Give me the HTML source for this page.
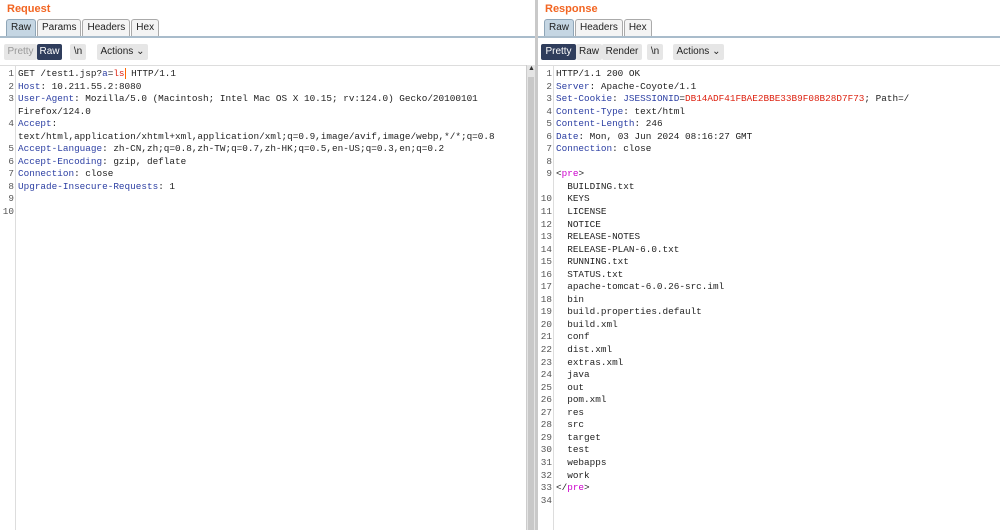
<!DOCTYPE html>
<html><head><meta charset="utf-8"><style>
*{margin:0;padding:0;box-sizing:border-box}
body{width:1000px;height:530px;background:#fff;font-family:"Liberation Sans",sans-serif;position:relative;overflow:hidden}
.pane{position:absolute;top:0;height:530px;background:#fff}
.title{position:absolute;top:3px;left:7px;color:#f26522;font-weight:bold;font-size:11px}
.tabs{position:absolute;top:19px;left:6px;display:flex;height:18px}
.tab{border:1px solid #aaa;border-bottom:none;border-radius:3px 3px 0 0;background:#f4f4f4;font-size:10px;padding:2px 4px 0;color:#222;margin-right:1px;height:18px}
.tab.sel{background:#c5d6e3;border-color:#8fa6b8}
.tabline{position:absolute;top:36px;left:0;right:0;height:2px;background:#a9bccb}
.tb{position:absolute;top:44px;display:flex;gap:0}
.b{font-size:10px;height:16px;line-height:16px;padding:0;text-align:center;white-space:nowrap;background:#e6e6e6;color:#222;border-radius:2px;flex:none}
.b.dark{background:#2f3d5c;color:#fff}
.b.dim{color:#999}
.ed{position:absolute;top:65px;bottom:0;border-top:1px solid #ddd}
.gut{position:absolute;top:0;bottom:0;left:0;width:16px;border-right:1px solid #ddd;background:#fff}
pre{position:absolute;top:2px;left:0;font-family:"Liberation Mono",monospace;font-size:9.35px;line-height:12.55px;color:#222}
.n{display:inline-block;width:14px;text-align:right;color:#555;margin-right:4px}
.k{color:#2c3fa3}.r{color:#d21}.p{color:#c0c}
</style></head><body>
<div class="pane" style="left:0;width:535px">
<div class="title">Request</div>
<div class="tabs"><div class="tab sel">Raw</div><div class="tab">Params</div><div class="tab">Headers</div><div class="tab">Hex</div></div>
<div class="tabline"></div>
<div class="tb" style="left:4px"><span class="b dim" style="width:33px">Pretty</span><span class="b dark" style="width:25px">Raw</span><span class="b" style="margin-left:8px;width:16px">\n</span><span class="b" style="margin-left:11px;width:51px">Actions ⌄</span></div>
<div class="ed" style="left:0;width:526px"><div class="gut"></div>
<pre><span class="n">1</span>GET /test1.jsp?<span class="k">a</span>=<span class="r">ls</span><span style="border-left:1px solid #f60"></span> HTTP/1.1
<span class="n">2</span><span class="k">Host</span>: 10.211.55.2:8080
<span class="n">3</span><span class="k">User-Agent</span>: Mozilla/5.0 (Macintosh; Intel Mac OS X 10.15; rv:124.0) Gecko/20100101
<span class="n"></span>Firefox/124.0
<span class="n">4</span><span class="k">Accept</span>:
<span class="n"></span>text/html,application/xhtml+xml,application/xml;q=0.9,image/avif,image/webp,*/*;q=0.8
<span class="n">5</span><span class="k">Accept-Language</span>: zh-CN,zh;q=0.8,zh-TW;q=0.7,zh-HK;q=0.5,en-US;q=0.3,en;q=0.2
<span class="n">6</span><span class="k">Accept-Encoding</span>: gzip, deflate
<span class="n">7</span><span class="k">Connection</span>: close
<span class="n">8</span><span class="k">Upgrade-Insecure-Requests</span>: 1
<span class="n">9</span>
<span class="n">10</span></pre></div>
<div style="position:absolute;left:526px;top:65px;width:9px;bottom:0;background:#e4e4e4;border-left:1px solid #ccc"><div style="position:absolute;top:0;left:1px;font-size:7px;color:#333">▲</div><div style="position:absolute;top:12px;left:1px;right:1px;bottom:0;background:#c8c8c8"></div></div>
</div>
<div style="position:absolute;left:535px;top:0;width:3px;height:530px;background:#c9c9c9"></div>
<div class="pane" style="left:538px;width:462px">
<div class="title">Response</div>
<div class="tabs"><div class="tab sel">Raw</div><div class="tab">Headers</div><div class="tab">Hex</div></div>
<div class="tabline"></div>
<div class="tb" style="left:3px"><span class="b dark" style="width:35px">Pretty</span><span class="b" style="width:26px">Raw</span><span class="b" style="width:40px">Render</span><span class="b" style="margin-left:5px;width:16px">\n</span><span class="b" style="margin-left:10px;width:51px">Actions ⌄</span></div>
<div class="ed" style="left:0;right:0"><div class="gut"></div>
<pre><span class="n">1</span>HTTP/1.1 200 OK
<span class="n">2</span><span class="k">Server</span>: Apache-Coyote/1.1
<span class="n">3</span><span class="k">Set-Cookie</span>: <span class="k">JSESSIONID</span>=<span class="r">DB14ADF41FBAE2BBE33B9F08B28D7F73</span>; Path=/
<span class="n">4</span><span class="k">Content-Type</span>: text/html
<span class="n">5</span><span class="k">Content-Length</span>: 246
<span class="n">6</span><span class="k">Date</span>: Mon, 03 Jun 2024 08:16:27 GMT
<span class="n">7</span><span class="k">Connection</span>: close
<span class="n">8</span>
<span class="n">9</span>&lt;<span class="p">pre</span>&gt;
<span class="n"></span>  BUILDING.txt
<span class="n">10</span>  KEYS
<span class="n">11</span>  LICENSE
<span class="n">12</span>  NOTICE
<span class="n">13</span>  RELEASE-NOTES
<span class="n">14</span>  RELEASE-PLAN-6.0.txt
<span class="n">15</span>  RUNNING.txt
<span class="n">16</span>  STATUS.txt
<span class="n">17</span>  apache-tomcat-6.0.26-src.iml
<span class="n">18</span>  bin
<span class="n">19</span>  build.properties.default
<span class="n">20</span>  build.xml
<span class="n">21</span>  conf
<span class="n">22</span>  dist.xml
<span class="n">23</span>  extras.xml
<span class="n">24</span>  java
<span class="n">25</span>  out
<span class="n">26</span>  pom.xml
<span class="n">27</span>  res
<span class="n">28</span>  src
<span class="n">29</span>  target
<span class="n">30</span>  test
<span class="n">31</span>  webapps
<span class="n">32</span>  work
<span class="n">33</span>&lt;/<span class="p">pre</span>&gt;
<span class="n">34</span></pre></div>
</div>
</body></html>
